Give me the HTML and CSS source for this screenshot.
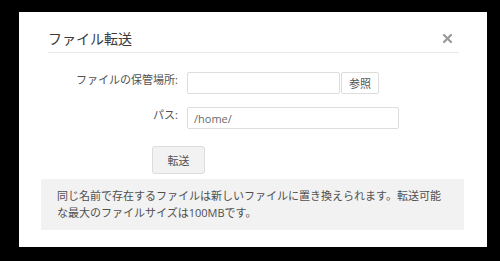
FILE: index.html
```html
<!DOCTYPE html>
<html lang="ja">
<head>
    <meta charset="UTF-8">
    <meta name="viewport" content="width=device-width, initial-scale=1.0">
    <title>ファイル転送</title>
    <link rel="stylesheet" href="styles.css">
</head>
<body>
    <div class="dialog">
        <div class="dialog-header">
            <h3 class="dialog-title">ファイル転送</h3>
            <button type="button" class="close-btn" aria-label="閉じる">
                <svg width="9" height="9" viewBox="0 0 9 9">
                    <path d="M1 1 L8 8 M8 1 L1 8" stroke="#9a9a9a" stroke-width="2.2" stroke-linecap="square"/>
                </svg>
            </button>
        </div>

        <form class="transfer-form" onsubmit="return false">
            <div class="form-row">
                <label for="localFile">ファイルの保管場所:</label>
                <div class="file-group">
                    <input type="text" id="localFile" class="file-input">
                    <button type="button" class="browse-btn">参照</button>
                </div>
            </div>

            <div class="form-row">
                <label for="remotePath">パス:</label>
                <input type="text" id="remotePath" class="path-input" placeholder="/home/">
            </div>

            <button type="submit" class="submit-btn">転送</button>
        </form>

        <div class="info-box">
            同じ名前で存在するファイルは新しいファイルに置き換えられます。転送可能な最大のファイルサイズは100MBです。
        </div>
    </div>
</body>
</html>
```

FILE: styles.css
```css
* {
    margin: 0;
    padding: 0;
    box-sizing: border-box;
}

body {
    background: #000;
    font-family: "Open Sans", "Noto Sans CJK JP", sans-serif;
    color: #555;
}

.dialog {
    background: #fff;
    width: 468px;
    height: 235px;
    margin: 12px 0 0 19px;
    padding: 16px 28px 0 29px;
}

.dialog-header {
    display: flex;
    justify-content: space-between;
    align-items: center;
    padding-bottom: 3px;
    border-bottom: 1px solid #e8e8e8;
}

.dialog-title {
    font-size: 14px;
    font-weight: normal;
    line-height: 21px;
    color: #3a3a3a;
}

.close-btn {
    background: none;
    border: none;
    margin-right: 7px;
    display: flex;
    cursor: pointer;
}

.transfer-form {
    padding-top: 19px;
}

.form-row {
    display: flex;
    align-items: flex-start;
    margin-bottom: 13px;
}

.form-row label {
    width: 130px;
    margin-right: 9px;
    text-align: right;
    font-size: 11px;
    line-height: 15px;
    color: #505050;
}

.file-group {
    display: flex;
}

input {
    height: 22px;
    border: 1px solid #ddd;
    border-radius: 2px;
    padding: 0 6px;
    font-family: "Open Sans", "Noto Sans CJK JP", sans-serif;
    font-size: 11px;
    color: #555;
}

input::placeholder {
    color: #6a6a6a;
}

.file-input {
    width: 153px;
}

.path-input {
    width: 212px;
}

.browse-btn {
    width: 38px;
    height: 22px;
    margin-left: 1px;
    background: #fff;
    border: 1px solid #ddd;
    border-radius: 2px;
    font-family: "Open Sans", "Noto Sans CJK JP", sans-serif;
    font-size: 11px;
    color: #555;
}

.submit-btn {
    display: block;
    width: 53px;
    height: 28px;
    margin: 17px 0 0 104px;
    background: #f2f2f2;
    border: 1px solid #ddd;
    border-radius: 3px;
    font-family: "Open Sans", "Noto Sans CJK JP", sans-serif;
    font-size: 11px;
    color: #505050;
}

.info-box {
    margin: 5px -5px 0 -7px;
    padding: 8px 16px 9px;
    background: #f2f2f2;
    font-size: 11px;
    line-height: 17px;
    color: #505050;
}
```
